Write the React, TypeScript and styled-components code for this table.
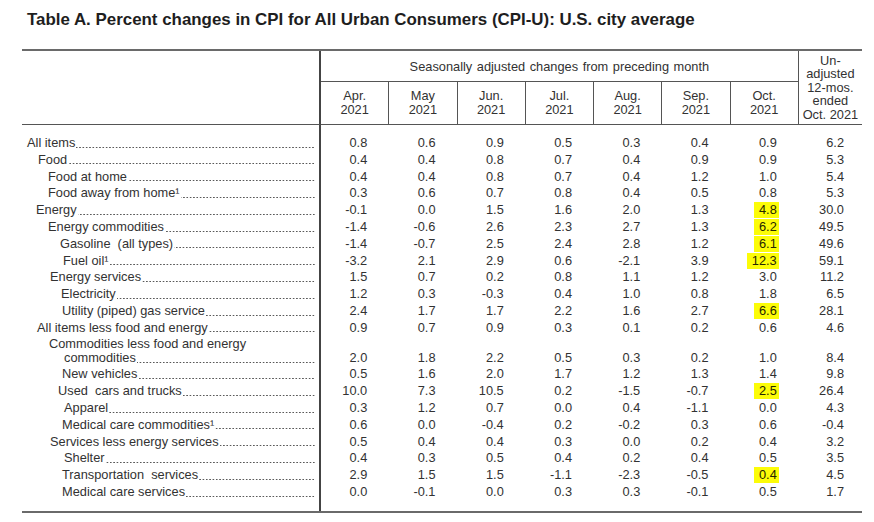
import React from 'react';
import styled, { createGlobalStyle, css } from 'styled-components';

const GlobalStyle = createGlobalStyle`
    *, *::before, *::after {
        box-sizing: border-box;
    }

    html, body {
        margin: 0;
        padding: 0;
        background: #fff;
    }

    body {
        font-family: "Liberation Sans", Arial, sans-serif;
        color: #323232;
    }
`;

const STUB = 299;
const MONTH = 68.25;
const COLUMNS = `${STUB}px repeat(7, ${MONTH}px) 1fr`;
const ROW = 16.8;
// a wrapped label takes one row plus 13px
const WRAP_LINE = 14.4;
const WRAP_PAD = (ROW + 13 - 2 * WRAP_LINE) / 2;

interface Item {
    label: string;
    indent: number;
    values: string[];
    marked?: boolean;
    // second line of a wrapped label, with its own indent
    more?: { text: string; indent: number };
}

const months = ['Apr.', 'May', 'Jun.', 'Jul.', 'Aug.', 'Sep.', 'Oct.'];

const items: Item[] = [
    { label: 'All items', indent: 5, values: ['0.8', '0.6', '0.9', '0.5', '0.3', '0.4', '0.9', '6.2'] },
    { label: 'Food', indent: 16, values: ['0.4', '0.4', '0.8', '0.7', '0.4', '0.9', '0.9', '5.3'] },
    { label: 'Food at home', indent: 26, values: ['0.4', '0.4', '0.8', '0.7', '0.4', '1.2', '1.0', '5.4'] },
    { label: 'Food away from home¹', indent: 26, values: ['0.3', '0.6', '0.7', '0.8', '0.4', '0.5', '0.8', '5.3'] },
    { label: 'Energy', indent: 14, values: ['-0.1', '0.0', '1.5', '1.6', '2.0', '1.3', '4.8', '30.0'], marked: true },
    { label: 'Energy commodities', indent: 26, values: ['-1.4', '-0.6', '2.6', '2.3', '2.7', '1.3', '6.2', '49.5'], marked: true },
    { label: 'Gasoline  (all types)', indent: 38, values: ['-1.4', '-0.7', '2.5', '2.4', '2.8', '1.2', '6.1', '49.6'], marked: true },
    { label: 'Fuel oil¹', indent: 41, values: ['-3.2', '2.1', '2.9', '0.6', '-2.1', '3.9', '12.3', '59.1'], marked: true },
    { label: 'Energy services', indent: 28, values: ['1.5', '0.7', '0.2', '0.8', '1.1', '1.2', '3.0', '11.2'] },
    { label: 'Electricity', indent: 39, values: ['1.2', '0.3', '-0.3', '0.4', '1.0', '0.8', '1.8', '6.5'] },
    { label: 'Utility (piped) gas service', indent: 40, values: ['2.4', '1.7', '1.7', '2.2', '1.6', '2.7', '6.6', '28.1'], marked: true },
    { label: 'All items less food and energy', indent: 15, values: ['0.9', '0.7', '0.9', '0.3', '0.1', '0.2', '0.6', '4.6'] },
    {
        label: 'Commodities less food and energy',
        indent: 27,
        more: { text: 'commodities', indent: 15 },
        values: ['2.0', '1.8', '2.2', '0.5', '0.3', '0.2', '1.0', '8.4'],
    },
    { label: 'New vehicles', indent: 40, values: ['0.5', '1.6', '2.0', '1.7', '1.2', '1.3', '1.4', '9.8'] },
    { label: 'Used  cars and trucks', indent: 36, values: ['10.0', '7.3', '10.5', '0.2', '-1.5', '-0.7', '2.5', '26.4'], marked: true },
    { label: 'Apparel', indent: 42, values: ['0.3', '1.2', '0.7', '0.0', '0.4', '-1.1', '0.0', '4.3'] },
    { label: 'Medical care commodities¹', indent: 40, values: ['0.6', '0.0', '-0.4', '0.2', '-0.2', '0.3', '0.6', '-0.4'] },
    { label: 'Services less energy services', indent: 28, values: ['0.5', '0.4', '0.4', '0.3', '0.0', '0.2', '0.4', '3.2'] },
    { label: 'Shelter', indent: 42, values: ['0.4', '0.3', '0.5', '0.4', '0.2', '0.4', '0.5', '3.5'] },
    { label: 'Transportation  services', indent: 40, values: ['2.9', '1.5', '1.5', '-1.1', '-2.3', '-0.5', '0.4', '4.5'], marked: true },
    { label: 'Medical care services', indent: 40, values: ['0.0', '-0.1', '0.0', '0.3', '0.3', '-0.1', '0.5', '1.7'] },
];

const Page = styled.div`
    width: 874px;
    height: 522px;
    overflow: hidden;
`;

const Title = styled.h1`
    margin: 0;
    padding: 10px 0 0 27px;
    font-size: 16.9px;
    line-height: 20px;
    font-weight: bold;
    color: #1e1e1e;
    white-space: nowrap;
`;

const Table = styled.div`
    margin: 19px 0 0 22px;
    width: 840px;
    border-top: 2px solid #6a6a6a;
    border-bottom: 2px solid #6a6a6a;
    font-size: 12.8px;
`;

const Head = styled.div`
    display: grid;
    grid-template-columns: ${COLUMNS};
    grid-template-rows: 31px 43px;
`;

const HeadCell = styled.div<{ $divider?: boolean }>`
    display: flex;
    align-items: center;
    justify-content: center;
    text-align: center;
    line-height: 13.6px;
    border-bottom: 1px solid #555;

    ${({ $divider }) =>
        $divider &&
        css`
            border-right: 1px solid #555;
        `}
`;

const Stub = styled(HeadCell)`
    grid-row: 1 / 3;
    border-right: 2px solid #444;
`;

const Spanner = styled(HeadCell)`
    grid-column: 2 / 9;
    word-spacing: 1px;
    padding-top: 1px;
`;

const Unadjusted = styled(HeadCell)`
    grid-column: 9;
    grid-row: 1 / 3;
`;

const Row = styled.div`
    display: grid;
    grid-template-columns: ${COLUMNS};
    align-items: end;
`;

const Spacer = styled.div<{ $height: number }>`
    height: ${({ $height }) => $height}px;
    border-right: 2px solid #444;
`;

const LabelCell = styled.div<{ $indent: number; $wrapped?: boolean }>`
    align-self: stretch;
    display: flex;
    flex-direction: column;
    justify-content: flex-end;
    padding-left: ${({ $indent }) => $indent}px;
    padding-right: 4px;
    border-right: 2px solid #444;
    line-height: ${ROW}px;
    white-space: pre;
    min-width: 0;

    ${({ $wrapped }) =>
        $wrapped &&
        css`
            line-height: ${WRAP_LINE}px;
            padding-top: ${WRAP_PAD}px;
            padding-bottom: ${WRAP_PAD}px;
        `}
`;

const LabelLine = styled.div<{ $shift?: number }>`
    display: flex;
    min-width: 0;
    margin-left: ${({ $shift }) => $shift ?? 0}px;
`;

// dot leader drawn as a repeating dot row on the baseline
const Leader = styled.span<{ $lineHeight: number }>`
    flex: 1;
    min-width: 0;
    height: ${({ $lineHeight }) => $lineHeight}px;
    margin-left: 1px;
    background-image: radial-gradient(circle at center, #5a5a5a 0.65px, transparent 1.05px);
    background-size: 3.33px 3px;
    background-repeat: repeat-x;
    background-position: right 0 bottom ${({ $lineHeight }) => $lineHeight / 2 - 5.2}px;
`;

const Num = styled.div<{ $last?: boolean }>`
    text-align: right;
    padding-right: ${({ $last }) => ($last ? 18 : 22)}px;
    line-height: ${ROW}px;
    white-space: nowrap;
`;

const Mark = styled.span`
    display: inline-block;
    background: #fcfc08;
    line-height: 16px;
    padding: 0 2px 0 5px;
    margin: 0 -2px 0 -5px;
    color: #262600;
`;

const Label: React.FC<{ text: string; shift?: number; lineHeight?: number }> = ({ text, shift, lineHeight = ROW }) => (
    <LabelLine $shift={shift}>
        <span>{text}</span>
        <Leader $lineHeight={lineHeight} />
    </LabelLine>
);

export default function App() {
    return (
        <Page>
            <GlobalStyle />
            <Title>Table A. Percent changes in CPI for All Urban Consumers (CPI-U): U.S. city average</Title>
            <Table>
                <Head>
                    <Stub />
                    <Spanner $divider>Seasonally adjusted changes from preceding month</Spanner>
                    {months.map((m) => (
                        <HeadCell key={m} $divider>
                            {m}
                            <br />
                            2021
                        </HeadCell>
                    ))}
                    <Unadjusted>
                        Un-
                        <br />
                        adjusted
                        <br />
                        12-mos.
                        <br />
                        ended
                        <br />
                        Oct. 2021
                    </Unadjusted>
                </Head>

                <Row>
                    <Spacer $height={10} />
                </Row>
                {items.map((item) => (
                    <Row key={item.label}>
                        <LabelCell $indent={item.indent} $wrapped={!!item.more}>
                            {item.more ? (
                                <>
                                    <div>{item.label}</div>
                                    <Label text={item.more.text} shift={item.more.indent} lineHeight={WRAP_LINE} />
                                </>
                            ) : (
                                <Label text={item.label} />
                            )}
                        </LabelCell>
                        {item.values.map((v, i) => (
                            <Num key={i} $last={i === 7}>
                                {item.marked && i === 6 ? <Mark>{v}</Mark> : v}
                            </Num>
                        ))}
                    </Row>
                ))}
                <Row>
                    <Spacer $height={10} />
                </Row>
            </Table>
        </Page>
    );
}
